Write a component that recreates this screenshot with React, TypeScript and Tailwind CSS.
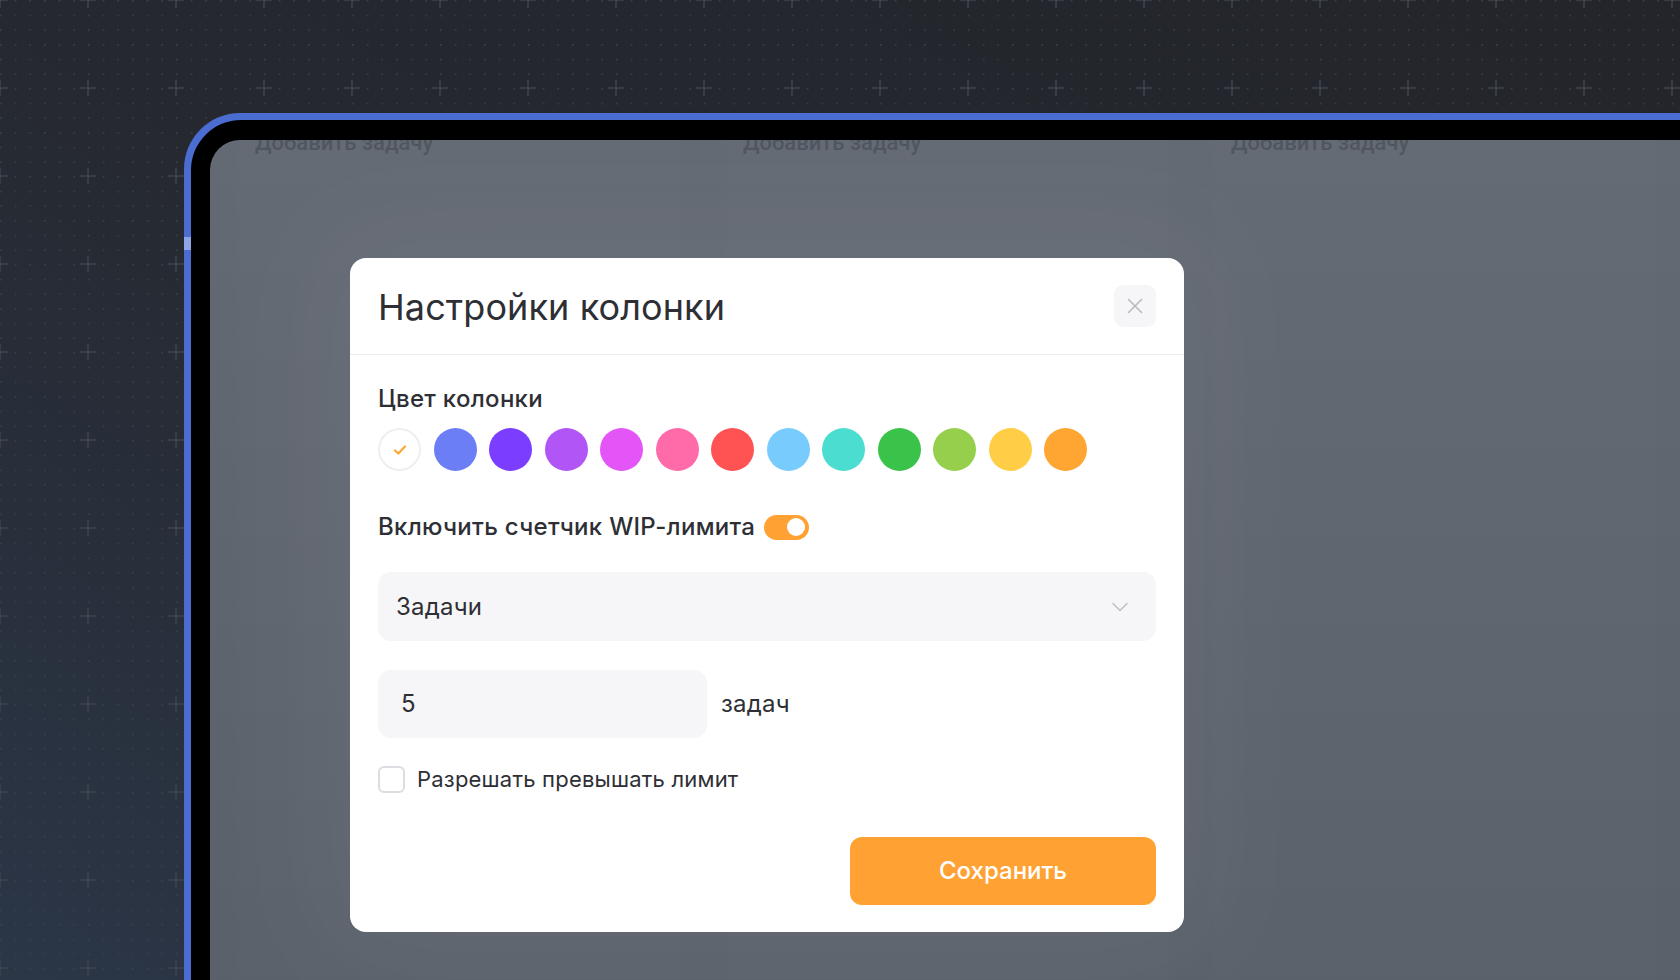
import { X, ChevronDown } from 'lucide-react';

const COLORS = [
  '#6c7ef5', '#7b3dff', '#b155f6', '#e455f7', '#ff6aa8', '#ff5252',
  '#78ccfd', '#4bddd0', '#3ac34a', '#95cf4b', '#ffcd46', '#ffa532',
];

const FONT = "font-['Inter','Noto_Sans',sans-serif]";

function GridBackdrop() {
  return (
    <svg className="absolute inset-0" width="1680" height="980">
      <defs>
        <pattern id="dots" width="14.667" height="14.667" patternUnits="userSpaceOnUse">
          <rect x="0" y="0" width="1.6" height="1.6" fill="#3b4049" />
        </pattern>
        <pattern id="cross" width="88" height="88" patternUnits="userSpaceOnUse">
          <path d="M0 -8 V8 M-8 0 H8 M88 -8 V8 M80 0 H96 M0 80 V96 M-8 88 H8 M88 80 V96 M80 88 H96" stroke="#3e434d" strokeWidth="1.5" />
        </pattern>
      </defs>
      <rect width="1680" height="980" fill="url(#dots)" />
      <rect width="1680" height="980" fill="url(#cross)" />
    </svg>
  );
}

function Board() {
  return (
    <div className="flex gap-[46px] px-[28px] -mt-[14px]">
      {['a', 'b', 'c'].map(k => (
        <div key={k} className="w-[442px] h-[900px] shrink-0 rounded-[18px] bg-white/[0.01] pl-[17px]">
          <span className="text-[22px] font-medium text-[#50565f] font-['Roboto',sans-serif]">Добавить задачу</span>
        </div>
      ))}
    </div>
  );
}

function ColorSwatches() {
  return (
    <div className="flex items-center gap-[12.5px] mt-[15px]">
      <div className="w-[43px] h-[43px] rounded-full border-2 border-[#eeeef3] bg-white flex items-center justify-center">
        <svg width="16" height="16" viewBox="0 0 16 16" fill="none">
          <path d="M3 8.5 L6.3 11.5 L13 4.5" stroke="#ffa532" strokeWidth="2.2" strokeLinecap="round" strokeLinejoin="round" />
        </svg>
      </div>
      {COLORS.map(c => (
        <div key={c} className="w-[43px] h-[43px] rounded-full" style={{ backgroundColor: c }} />
      ))}
    </div>
  );
}

function SettingsModal() {
  return (
    <div className={`w-[834px] bg-white rounded-[16px] shadow-[0_0_120px_40px_rgba(255,255,255,0.045)] ${FONT} text-[#2e2f35]`}>
      <div className="h-[97px] px-[28px] flex items-center justify-between border-b border-[#ececf0]">
        <h2 className="text-[36px] font-normal tracking-[0.1px] mt-[2px]">Настройки колонки</h2>
        <button className="w-[42px] h-[42px] rounded-[9px] bg-[#f6f6f8] flex items-center justify-center">
          <X size={26} strokeWidth={1.5} className="text-[#b9bac0]" />
        </button>
      </div>

      <div className="px-[28px] pt-[30px] pb-[27px]">
        <div className="text-[24px] font-medium leading-[28px] tracking-[0.3px]">Цвет колонки</div>
        <ColorSwatches />

        <div className="flex items-center gap-[9px] mt-[42px] h-[28px]">
          <span className="text-[24px] font-medium tracking-[0.3px]">Включить счетчик WIP-лимита</span>
          <div className="w-[45px] h-[25px] rounded-full bg-[#ffa133] flex items-center justify-end pr-[4px]">
            <div className="w-[18px] h-[18px] rounded-full bg-white" />
          </div>
        </div>

        <div className="mt-[31px] h-[69px] rounded-[13px] bg-[#f6f6f8] flex items-center justify-between pl-[18px] pr-[22px]">
          <span className="text-[24px] tracking-[0.2px]">Задачи</span>
          <ChevronDown size={28} strokeWidth={1.4} className="text-[#c0c1c7]" />
        </div>

        <div className="mt-[29px] flex items-center gap-[14px]">
          <div className="w-[329px] h-[68px] rounded-[13px] bg-[#f6f6f8] flex items-center pl-[23px]">
            <span className="text-[24px]">5</span>
          </div>
          <span className="text-[24px] tracking-[0.2px]">задач</span>
        </div>

        <div className="mt-[27px] h-[28px] flex items-center gap-[12px]">
          <div className="w-[27px] h-[27px] rounded-[6px] border-2 border-[#dcdde3] bg-white" />
          <span className="text-[22px] tracking-[0.2px]">Разрешать превышать лимит</span>
        </div>

        <div className="mt-[44px] flex justify-end">
          <button className="w-[306px] h-[68px] rounded-[12px] bg-[#ffa133] text-white text-[24px] font-medium">
            Сохранить
          </button>
        </div>
      </div>
    </div>
  );
}

export default function App() {
  return (
    <div className="relative w-[1680px] h-[980px] overflow-hidden bg-gradient-to-tr from-[#2b3647] via-[#25282f] to-[#23252b]">
      <GridBackdrop />
      <div className="relative pl-[184px] pt-[113px]">
        <div className="relative w-[1600px] h-[1000px] rounded-tl-[56px] bg-[#4b6cd0] pl-[7px] pt-[7px]">
          <div className="absolute left-0 top-[124px] w-[7px] h-[13px] bg-[#8fa6e6]" />
          <div className="w-full h-full rounded-tl-[50px] bg-black pl-[19px] pt-[20px]">
            <div className="relative w-full h-full rounded-tl-[30px] overflow-hidden bg-gradient-to-b from-[#646a74] to-[#595f69]">
              <Board />
              <div className="absolute left-[140px] top-[118px]">
                <SettingsModal />
              </div>
            </div>
          </div>
        </div>
      </div>
    </div>
  );
}
